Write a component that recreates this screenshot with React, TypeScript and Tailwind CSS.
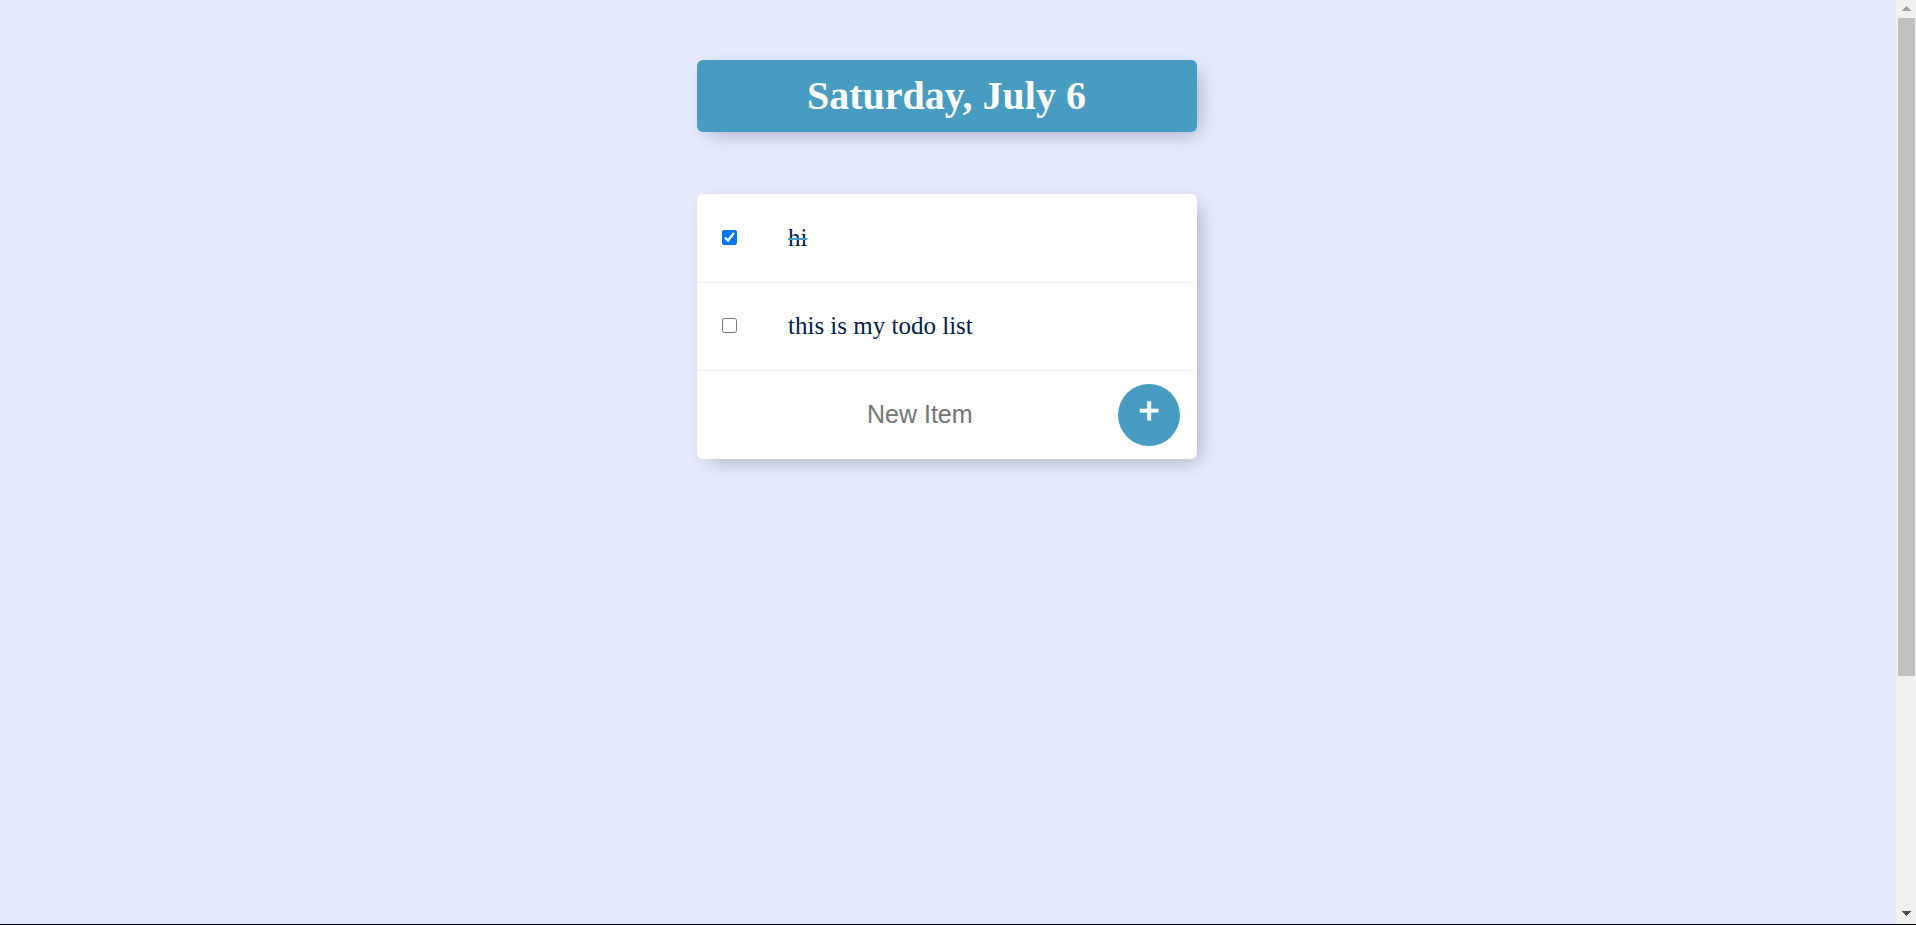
type Item = { text: string; done: boolean };

const items: Item[] = [
  { text: "hi", done: true },
  { text: "this is my todo list", done: false },
];

const SHADOW = "shadow-[6px_6px_19px_-6px_rgba(0,0,0,0.3)]";

function Scrollbar() {
  return (
    <div className="flex w-5 shrink-0 flex-col items-center bg-[#f1f1f1]">
      <svg className="h-[18px] w-5 shrink-0" viewBox="0 0 20 18" shapeRendering="crispEdges">
        <path d="M10.5 6L15 11H6Z" fill="#a3a3a3" />
      </svg>
      <div className="ml-px h-[658px] w-[17px] bg-[#c1c1c1]" />
      <svg className="mt-auto mb-[2px] h-[18px] w-5 shrink-0" viewBox="0 0 20 18" shapeRendering="crispEdges">
        <path d="M6 7H15L10.5 12Z" fill="#505050" />
      </svg>
    </div>
  );
}

function Row({ item }: { item: Item }) {
  return (
    <label className="flex h-[88px] items-center border-b border-[#f1f1f1] bg-white pb-[2px] first:h-[89px] first:pb-px">
      <input
        type="checkbox"
        defaultChecked={item.done}
        className="ml-[25px] mr-[26px] h-[15px] w-[15px] shrink-0"
      />
      <p
        className={
          item.done
            ? "px-[25px] text-[25px] leading-7 text-[#00204a] line-through decoration-[#489bc1] decoration-2"
            : "px-[25px] text-[25px] leading-7 text-[#00204a]"
        }
      >
        {item.text}
      </p>
    </label>
  );
}

export default function App() {
  return (
    <div className="flex h-[925px] flex-col overflow-hidden border-b border-black bg-[#e4e9fd] font-['Liberation_Serif',serif]">
      <div className="flex min-h-0 flex-1">
        <main className="flex flex-1 flex-col pl-[697px]">
          <header
            className={`mt-[60px] flex h-[72px] w-[500px] items-center justify-center rounded-[6px] bg-[#489bc1] ${SHADOW}`}
          >
            <h1 className="pr-px text-[40px] leading-[48px] font-bold text-white">Saturday, July 6</h1>
          </header>
          <section className={`mt-[62px] h-[265px] w-[500px] overflow-hidden rounded-[6px] bg-white ${SHADOW}`}>
            {items.map((item) => (
              <Row key={item.text} item={item} />
            ))}
            <form className="flex h-[88px] items-center pl-[145px]">
              <input
                type="text"
                placeholder="New Item"
                className="h-[86px] w-[276px] bg-transparent pb-[2px] pl-[25px] font-['Liberation_Sans',sans-serif] text-[25px] placeholder:text-[#757575]"
              />
              <button
                type="button"
                className="flex h-[62px] w-[62px] items-center justify-center rounded-full bg-[#489bc1] pb-[8px] font-['Liberation_Sans',sans-serif] text-[36px] leading-none text-white [-webkit-text-stroke:1.1px_white]"
              >
                +
              </button>
            </form>
          </section>
        </main>
        <Scrollbar />
      </div>
    </div>
  );
}
